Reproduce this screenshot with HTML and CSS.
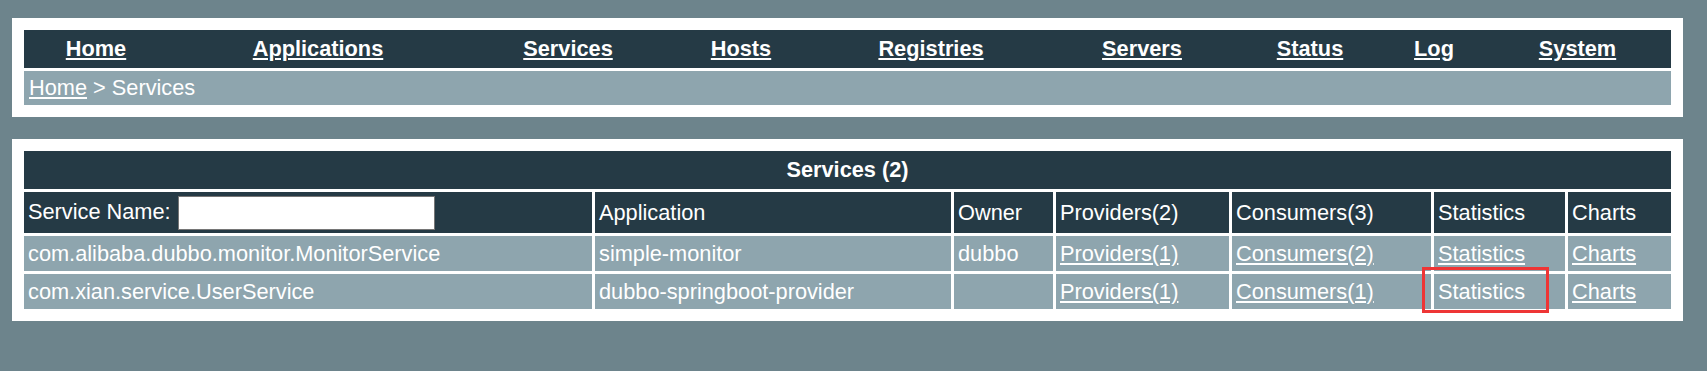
FILE: index.html
```
<!DOCTYPE html>
<html lang="en">
<head>
    <meta charset="UTF-8">
    <title>Services</title>
    <link rel="stylesheet" href="styles.css">
</head>
<body>

    <div class="panel top-panel">
        <div class="menu">
            <a href="#">Home</a>
            <a href="#">Applications</a>
            <a href="#">Services</a>
            <a href="#">Hosts</a>
            <a href="#">Registries</a>
            <a href="#">Servers</a>
            <a href="#">Status</a>
            <a href="#">Log</a>
            <a href="#">System</a>
        </div>
        <div class="crumb"><a href="#">Home</a> &gt; Services</div>
    </div>

    <div class="panel list-panel">
        <table class="list">
            <colgroup>
                <col class="c-name">
                <col class="c-app">
                <col class="c-owner">
                <col class="c-prov">
                <col class="c-cons">
                <col class="c-stat">
                <col class="c-chart">
            </colgroup>
            <tr class="title">
                <td colspan="7">Services (2)</td>
            </tr>
            <tr class="head">
                <td>Service Name: <input type="text" class="filter"></td>
                <td>Application</td>
                <td>Owner</td>
                <td>Providers(2)</td>
                <td>Consumers(3)</td>
                <td>Statistics</td>
                <td>Charts</td>
            </tr>
            <tr class="row">
                <td>com.alibaba.dubbo.monitor.MonitorService</td>
                <td>simple-monitor</td>
                <td>dubbo</td>
                <td><a href="#">Providers(1)</a></td>
                <td><a href="#">Consumers(2)</a></td>
                <td><a href="#">Statistics</a></td>
                <td><a href="#">Charts</a></td>
            </tr>
            <tr class="row">
                <td>com.xian.service.UserService</td>
                <td>dubbo-springboot-provider</td>
                <td></td>
                <td><a href="#">Providers(1)</a></td>
                <td><a href="#">Consumers(1)</a></td>
                <td class="marked">Statistics<span class="mark"></span></td>
                <td><a href="#">Charts</a></td>
            </tr>
        </table>
    </div>

</body>
</html>
```

FILE: styles.css
```
body {
    font-family: "Liberation Sans", Arial, sans-serif;
    font-size: 21.75px;
    color: white;
    background-color: #6d848c;
    margin: 0;
    padding: 18px 24px 0 12px;
}
a {
    color: white;
}
.panel {
    background-color: white;
    width: 1671px;
    box-sizing: border-box;
}
.top-panel {
    padding: 12px;
    display: flex;
    flex-direction: column;
    gap: 3px;
}
.menu {
    display: grid;
    grid-template-columns: 144px 300px 200px 146px 234px 188px 148px 100px 1fr;
    align-items: center;
    height: 38px;
    background-color: #253a45;
    text-align: center;
}
.menu a {
    font-weight: bold;
    justify-self: center;
}
.crumb {
    height: 34px;
    line-height: 34px;
    padding-left: 5px;
    background-color: #8ea5ae;
}
.list-panel {
    margin-top: 22px;
    padding: 9px;
}
.list {
    width: 100%;
    table-layout: fixed;
    border-spacing: 3px;
}
.list td {
    padding: 0 4px;
    white-space: nowrap;
}
.c-name { width: 568px; }
.c-app { width: 356px; }
.c-owner { width: 99px; }
.c-prov { width: 173px; }
.c-cons { width: 199px; }
.c-stat { width: 131px; }
.c-chart { width: 103px; }
.title td {
    height: 38px;
    background-color: #253a45;
    font-weight: bold;
    text-align: center;
}
.head td {
    height: 41px;
    background-color: #253a45;
}
.row td {
    height: 35px;
    background-color: #8ea5ae;
}
.filter {
    width: 257px;
    height: 34px;
    box-sizing: border-box;
    border: 1px solid #767676;
    margin: 0 0 0 1px;
    vertical-align: middle;
}
.marked {
    position: relative;
}
.mark {
    position: absolute;
    left: -12px;
    top: -7px;
    width: 127px;
    height: 46px;
    box-sizing: border-box;
    border: 3px solid #ee3535;
}
```
